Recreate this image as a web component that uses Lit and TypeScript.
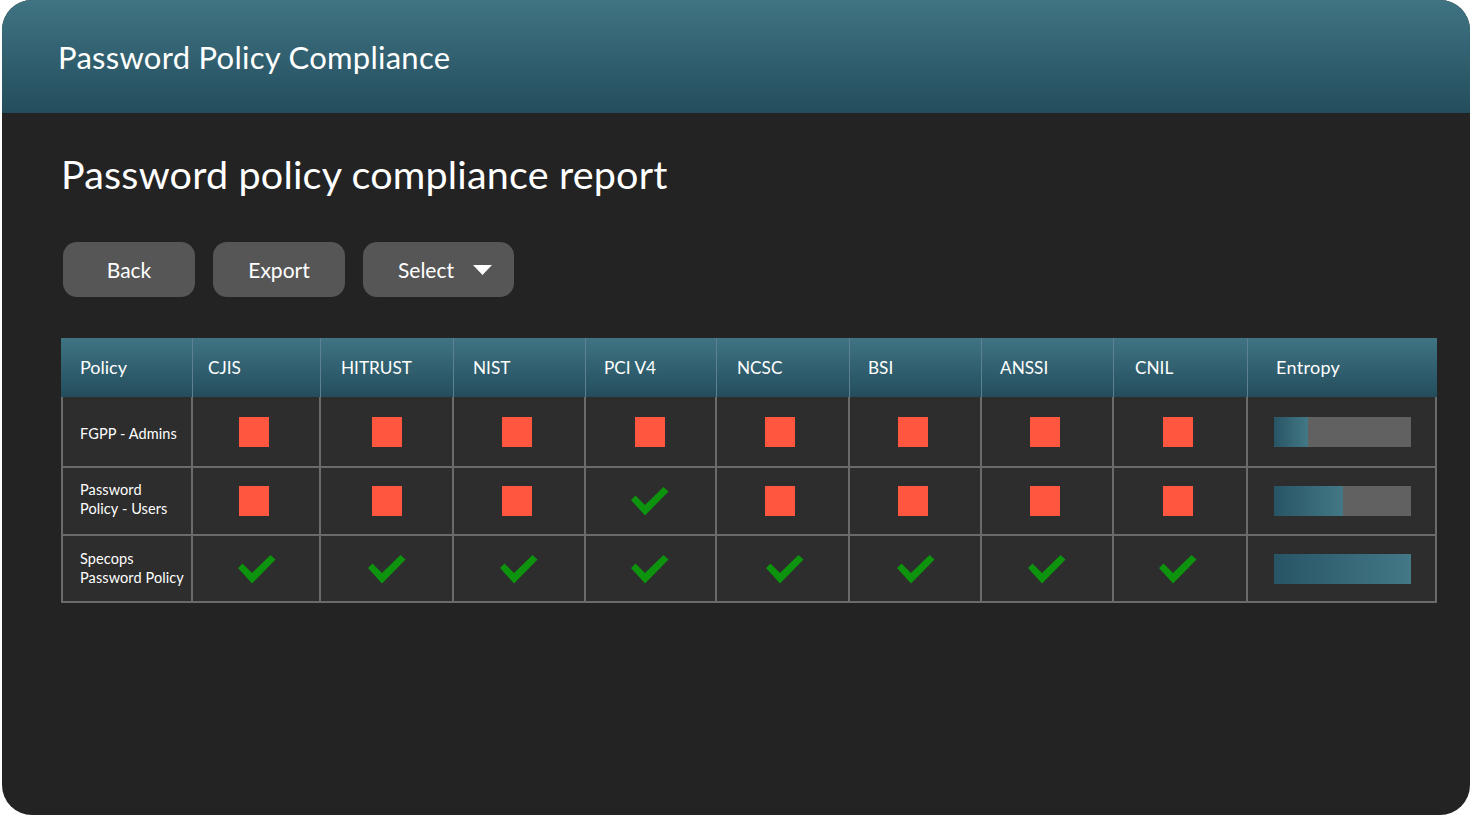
import { LitElement, html, css, svg } from 'lit';
import { customElement } from 'lit/decorators.js';

// left padding of each column: header text, red square, green check
const columns = [
  { name: 'CJIS', width: 128, head: 15, square: 46, check: 45 },
  { name: 'HITRUST', width: 133, head: 20, square: 51, check: 47 },
  { name: 'NIST', width: 132, head: 19, square: 48, check: 46 },
  { name: 'PCI V4', width: 131, head: 18, square: 49, check: 45 },
  { name: 'NCSC', width: 133, head: 20, square: 48, check: 49 },
  { name: 'BSI', width: 132, head: 18, square: 48, check: 47 },
  { name: 'ANSSI', width: 132, head: 18, square: 48, check: 46 },
  { name: 'CNIL', width: 134, head: 21, square: 49, check: 45 },
];

const rows = [
  { label: ['FGPP - Admins'], passed: [false, false, false, false, false, false, false, false], entropy: 25 },
  { label: ['Password', 'Policy - Users'], passed: [false, false, false, true, false, false, false, false], entropy: 50 },
  { label: ['Specops', 'Password Policy'], passed: [true, true, true, true, true, true, true, true], entropy: 100 },
];

const check = svg`<path d="M0 13 L4.5 8.5 L14 18 L32.5 0 L37.5 4.5 L14 28.5 Z" fill="#0d930d"></path>`;

@customElement('app-root')
export class AppRoot extends LitElement {
  static styles = css`
    :host {
      display: block;
      background: #fff;
      font-family: 'Lato', 'Open Sans', sans-serif;
      color: #fff;
    }
    .frame {
      box-sizing: border-box;
      height: 815px;
      margin: 0 3px 0 2px;
      background: #232323;
      border-radius: 30px;
      overflow: hidden;
    }
    .header {
      height: 113px;
      box-sizing: border-box;
      padding: 37px 0 0 56px;
      background: linear-gradient(#407483, #234d5d);
      font-size: 31px;
      line-height: 40px;
      letter-spacing: 0.27px;
    }
    .content {
      padding: 37px 0 0 59px;
    }
    h1 {
      margin: 0;
      font-weight: 400;
      font-size: 39.5px;
      line-height: 48px;
      letter-spacing: 0.18px;
    }
    .actions {
      display: flex;
      gap: 18px;
      margin: 44px 0 0 2px;
    }
    .btn {
      box-sizing: border-box;
      width: 132px;
      height: 55px;
      display: flex;
      align-items: center;
      justify-content: center;
      background: #565656;
      border-radius: 14px;
      font-size: 21px;
    }
    .btn.select {
      width: 151px;
      justify-content: flex-start;
      padding-left: 35px;
      gap: 19px;
    }
    .caret {
      width: 19px;
      height: 10px;
    }
    .table {
      margin-top: 41px;
      width: 1376px;
      font-size: 18px;
    }
    .row {
      display: flex;
    }
    .head {
      height: 59px;
      background: linear-gradient(#407483, #234d5d);
    }
    .head .cell {
      display: flex;
      align-items: center;
      border-right: 1px solid #5d8190;
      box-sizing: border-box;
      padding-bottom: 2px;
    }
    .head .cell:last-child {
      border-right: 0;
    }
    .head .standard {
      font-size: 17.2px;
      padding-bottom: 0;
    }
    .head .entropy {
      letter-spacing: 0.3px;
    }
    .body {
      background: #2d2d2d;
      border-left: 2px solid #6a6a6a;
      border-right: 2px solid #6a6a6a;
      border-bottom: 2px solid #6a6a6a;
      box-sizing: border-box;
    }
    .body .row {
      height: 68px;
      border-bottom: 2px solid #6a6a6a;
      box-sizing: border-box;
    }
    .body .row:first-child {
      height: 71px;
    }
    .body .row:last-child {
      height: 65px;
      border-bottom: 0;
    }
    .body .cell {
      box-sizing: border-box;
      display: flex;
      align-items: center;
      border-right: 2px solid #6a6a6a;
    }
    .body .cell:last-child {
      border-right: 0;
    }
    .policy {
      width: 132px;
      padding-left: 19px;
      flex: none;
      box-sizing: border-box;
    }
    .body .policy {
      width: 130px;
      padding-left: 17px;
      font-size: 14.5px;
      line-height: 19px;
      letter-spacing: 0.1px;
    }
    .body .row:nth-child(1) .policy {
      padding-top: 4px;
    }
    .body .row:nth-child(2) .policy {
      padding-bottom: 4px;
    }
    .body .row:nth-child(3) .policy {
      padding-bottom: 2px;
    }
    .square {
      width: 30px;
      height: 30px;
      background: #ff5640;
    }
    .tick {
      width: 38px;
      height: 30px;
    }
    .entropy {
      flex: 1;
      padding-left: 26px;
    }
    .head .entropy {
      padding-left: 28px;
    }
    .track {
      width: 137px;
      height: 30px;
      background: #616161;
    }
    .fill {
      height: 100%;
      background: linear-gradient(90deg, #285566, #437886);
    }
  `;

  render() {
    return html`
      <div class="frame">
        <div class="header">Password Policy Compliance</div>
        <div class="content">
          <h1>Password policy compliance report</h1>
          <div class="actions">
            <div class="btn">Back</div>
            <div class="btn">Export</div>
            <div class="btn select">
              Select
              <svg class="caret" viewBox="0 0 19 10"><path d="M0 0 H19 L9.5 10 Z" fill="#fff"></path></svg>
            </div>
          </div>
          <div class="table">
            <div class="row head">
              <div class="cell policy">Policy</div>
              ${columns.map(
                (c) => html`<div class="cell standard" style="width:${c.width}px;padding-left:${c.head}px">${c.name}</div>`
              )}
              <div class="cell entropy">Entropy</div>
            </div>
            <div class="body">
              ${rows.map(
                (r) => html`
                  <div class="row">
                    <div class="cell policy">
                      <div>${r.label.map((l) => html`<div>${l}</div>`)}</div>
                    </div>
                    ${r.passed.map((ok, i) => this.renderMark(ok, i))}
                    <div class="cell entropy">
                      <div class="track"><div class="fill" style="width:${r.entropy}%"></div></div>
                    </div>
                  </div>
                `
              )}
            </div>
          </div>
        </div>
      </div>
    `;
  }

  renderMark(ok: boolean, i: number) {
    const c = columns[i];
    return html`<div class="cell" style="width:${c.width}px;padding-left:${ok ? c.check : c.square}px">
      ${ok
        ? html`<svg class="tick" viewBox="0 -1 38 30">${check}</svg>`
        : html`<div class="square"></div>`}
    </div>`;
  }
}
